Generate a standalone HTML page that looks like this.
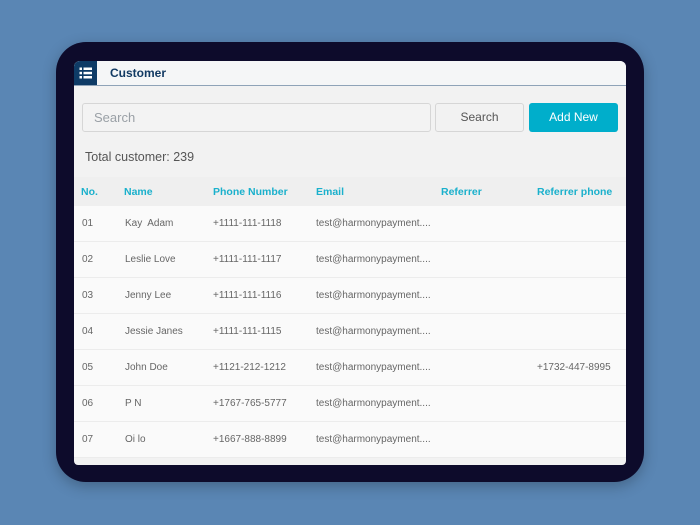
<!DOCTYPE html>
<html><head><style>
body{margin:0;width:700px;height:525px;background:#5a86b4;font-family:"Liberation Sans",sans-serif;position:relative;overflow:hidden}
.dev{position:absolute;left:56px;top:42px;width:588px;height:440px;background:#0d0b2b;border-radius:30px;box-shadow:0 4px 14px rgba(0,0,0,.25)}
.scr{position:absolute;left:74px;top:61px;width:552px;height:404px;background:#f2f2f2;border-radius:6px 6px 4px 4px;overflow:hidden}
.hdr{position:absolute;left:0;top:0;width:552px;height:24px;background:#f5f6f7;border-bottom:1px solid #8fa3b8}
.ic{position:absolute;left:0;top:0;width:23px;height:24px;background:#0e3b66}
.ht{position:absolute;left:36px;top:5px;font-size:12px;font-weight:bold;color:#123a63}
.inp{position:absolute;left:8px;top:42px;border:1px solid #d6d6d6;border-radius:3px;background:#f3f3f3;color:#9aa0a6;font-size:13px;line-height:27px;padding-left:11px;box-sizing:border-box;width:349px;height:29px}
.sb{position:absolute;left:361px;top:42px;width:89px;height:29px;border:1px solid #d6d6d6;border-radius:3px;box-sizing:border-box;text-align:center;line-height:27px;font-size:12px;color:#555}
.ab{position:absolute;left:455px;top:42px;width:89px;height:29px;background:#00aecb;border-radius:3px;text-align:center;line-height:29px;font-size:12px;color:#fff}
.tot{position:absolute;left:11px;top:89px;font-size:12.5px;color:#555}
.th{position:absolute;left:0;top:116px;width:552px;height:29px;background:#efefef}
.th span{position:absolute;top:9px;font-size:10.5px;font-weight:bold;color:#1ab0cc}
.r{position:absolute;left:0;width:552px;height:35px;background:#fafafa;border-bottom:1px solid #ececec}
.r span{position:absolute;top:12px;font-size:10px;color:#666}
</style></head><body>
<div class="dev"></div>
<div class="scr">
<div class="hdr"><div class="ic"><svg width="23" height="24"><g fill="#fff"><rect x="5.5" y="6.5" width="2.5" height="2.5"/><rect x="5.5" y="10.8" width="2.5" height="2.5"/><rect x="5.5" y="15" width="2.5" height="2.5"/><rect x="9.5" y="6.5" width="8.5" height="2.5"/><rect x="9.5" y="10.8" width="8.5" height="2.5"/><rect x="9.5" y="15" width="8.5" height="2.5"/></g></svg></div><div class="ht">Customer</div></div>
<div class="inp">Search</div>
<div class="sb">Search</div>
<div class="ab">Add New</div>
<div class="tot">Total customer: 239</div>
<div class="th"><span style="left:7px">No.</span><span style="left:50px">Name</span><span style="left:139px">Phone Number</span><span style="left:242px">Email</span><span style="left:367px">Referrer</span><span style="left:463px">Referrer phone</span></div>
<div class="r" style="top:145px"><span style="left:8px">01</span><span style="left:51px">Kay&nbsp; Adam</span><span style="left:139px">+1111-111-1118</span><span style="left:242px">test@harmonypayment....</span></div>
<div class="r" style="top:181px"><span style="left:8px">02</span><span style="left:51px">Leslie Love</span><span style="left:139px">+1111-111-1117</span><span style="left:242px">test@harmonypayment....</span></div>
<div class="r" style="top:217px"><span style="left:8px">03</span><span style="left:51px">Jenny Lee</span><span style="left:139px">+1111-111-1116</span><span style="left:242px">test@harmonypayment....</span></div>
<div class="r" style="top:253px"><span style="left:8px">04</span><span style="left:51px">Jessie Janes</span><span style="left:139px">+1111-111-1115</span><span style="left:242px">test@harmonypayment....</span></div>
<div class="r" style="top:289px"><span style="left:8px">05</span><span style="left:51px">John Doe</span><span style="left:139px">+1121-212-1212</span><span style="left:242px">test@harmonypayment....</span><span style="left:463px">+1732-447-8995</span></div>
<div class="r" style="top:325px"><span style="left:8px">06</span><span style="left:51px">P N</span><span style="left:139px">+1767-765-5777</span><span style="left:242px">test@harmonypayment....</span></div>
<div class="r" style="top:361px"><span style="left:8px">07</span><span style="left:51px">Oi lo</span><span style="left:139px">+1667-888-8899</span><span style="left:242px">test@harmonypayment....</span></div>
</div>
</body></html>
